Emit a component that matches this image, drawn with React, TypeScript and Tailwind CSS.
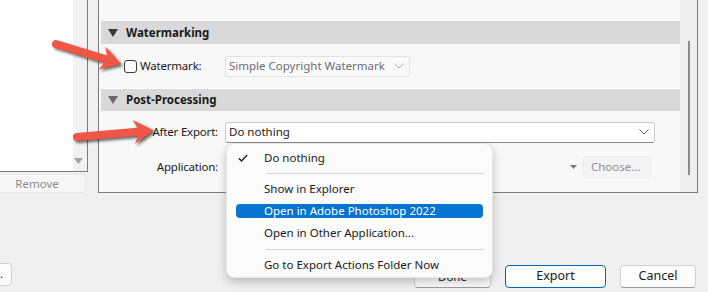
import React from "react";

const font = { fontFamily: '"Noto Sans", "Open Sans", sans-serif' };

function Arrow({ x, y, len, angle }: { x: number; y: number; len: number; angle: number }) {
  const h = len - 16;
  const d = `M0,-4 L${h},-4 L${h - 4},-12 L${len},0 L${h - 4},12 L${h},4 L0,4 A4,4 0 0 1 0,-4 Z`;
  return (
    <g transform={`translate(${x},${y}) rotate(${angle})`}>
      <path d={d} fill="#ef5646" />
    </g>
  );
}

function Chevron({ color = "#555" }: { color?: string }) {
  return (
    <svg width="10" height="6" viewBox="0 0 10 6">
      <path d="M0.5,0.5 L5,5 L9.5,0.5" fill="none" stroke={color} strokeWidth="1" />
    </svg>
  );
}

function Tri({ color }: { color: string }) {
  return (
    <svg width="10" height="8" viewBox="0 0 10 8">
      <path d="M0,0 L10,0 L5,8 Z" fill={color} />
    </svg>
  );
}

const items = [
  { label: "Show in Explorer" },
  { label: "Open in Adobe Photoshop 2022", active: true },
  { label: "Open in Other Application..." },
];

export default function App() {
  return (
    <div
      className="relative h-[292px] w-[708px] overflow-hidden bg-[#f0f0f0] text-[11.5px] text-[#1a1a1a]"
      style={font}
    >
      <div className="flex h-[193px]">
        {/* left list */}
        <div className="w-[88px] shrink-0">
          <div className="flex h-[172px] border-b border-r border-[#7c7c7c] bg-white">
            <div className="flex-1" />
            <div className="flex w-[14px] flex-col justify-end bg-[#f2f2f2] pb-[7px] pl-[1px]">
              <svg width="9" height="6" viewBox="0 0 9 6">
                <path d="M0,0 L9,0 L4.5,6 Z" fill="#a3a3a3" />
              </svg>
            </div>
          </div>
          <div className="-ml-[12px] mt-[2px] flex h-[19px] w-[98px] items-center justify-center rounded-[3px] border border-[#e8e8e8] bg-[#f6f6f6] text-[#8c8c8c]">
            Remove
          </div>
        </div>

        {/* main panel */}
        <div className="ml-[10px] flex h-[193px] w-[600px] border-b border-l border-r border-[#7c7c7c] bg-[#f8f8f8]">
          <div className="flex-1 pl-[2px] pt-[21px]">
            <div className="flex h-[23px] items-center gap-[8px] bg-[#d9d9d9] pl-[7px] font-bold">
              <Tri color="#3a3a3a" />
              <span>Watermarking</span>
            </div>
            <div className="flex h-[44px] items-center">
              <div className="flex w-[124px] items-center gap-[3px] pl-[23px]">
                <div className="h-[13px] w-[13px] rounded-[3px] border border-[#3c3c3c] bg-[#fbfbfb]" />
                <span className="tracking-[-0.2px]">Watermark:</span>
              </div>
              <div className="flex h-[21px] w-[185px] items-center justify-between rounded-[2px] border border-[#e3e3e3] bg-[#fafafa] pl-[3px] pr-[5px] text-[#6e6e6e]">
                <span>Simple Copyright Watermark</span>
                <Chevron color="#b0b0b0" />
              </div>
            </div>
            <div className="flex h-[23px] items-center gap-[8px] border-t border-white bg-[#d9d9d9] pl-[7px] font-bold">
              <Tri color="#6b6b6b" />
              <span>Post-Processing</span>
            </div>
            <div className="flex h-[33px] items-center pt-[9px]">
              <div className="w-[118px] pr-[1px] text-right tracking-[-0.2px]">After Export:</div>
              <div className="ml-[6px] flex h-[21px] w-[430px] items-center justify-between rounded-[3px] border border-[#cbcbcb] border-b-[#8e8e8e] bg-white pl-[3px] pr-[5px]">
                <span>Do nothing</span>
                <Chevron />
              </div>
            </div>
            <div className="flex h-[46px] items-center">
              <div className="w-[118px] pr-[1px] text-right tracking-[-0.2px]">Application:</div>
              <div className="ml-auto mr-[29px] flex items-center gap-[6px]">
                <svg width="7" height="4" viewBox="0 0 7 4">
                  <path d="M0,0 L7,0 L3.5,4 Z" fill="#7a7a7a" />
                </svg>
                <div className="flex h-[22px] w-[68px] items-center rounded-[3px] border border-[#ececec] bg-[#f4f4f4] pl-[7px] text-[#8f8f8f]">
                  Choose...
                </div>
              </div>
            </div>
          </div>
          <div className="flex w-[17px] justify-center bg-[#efefef] pt-[41px]">
            <div className="h-[134px] w-[2px] bg-[#8c8c8c]" />
          </div>
        </div>
      </div>

      {/* bottom buttons */}
      <div className="flex items-start pt-[70px]">
        <div className="flex h-[23px] w-[12px] items-center rounded-r-[4px] border border-l-0 border-[#cfcfcf] bg-[#fbfbfb] pb-[2px]">
          <span className="leading-none">.</span>
        </div>
        <div className="ml-auto mr-[12px] mt-[2px] flex gap-[14px]">
          <div className="flex h-[23px] w-[77px] items-center justify-center rounded-[4px] border border-[#d0d0d0] border-b-[#9a9a9a] bg-[#fdfdfd]">
            Done
          </div>
          <div className="flex h-[23px] w-[101px] items-center justify-center rounded-[4px] border border-[#0067c0] bg-[#fdfdfd] text-[12.5px]">
            Export
          </div>
          <div className="flex h-[23px] w-[76px] items-center justify-center rounded-[4px] border border-[#d0d0d0] border-b-[#9a9a9a] bg-[#fdfdfd] text-[12.5px]">
            Cancel
          </div>
        </div>
      </div>

      {/* dropdown menu */}
      <div className="absolute left-[226px] top-[143px] w-[267px] rounded-[8px] border border-[#e6e6e6] bg-[#fbfbfb] pb-[1px] pt-[3px] shadow-[0_4px_10px_rgba(0,0,0,0.22)]">
        <div className="flex h-[22px] items-center px-[9px]">
          <div className="flex w-[28px] pl-[2px]">
            <svg width="10" height="8" viewBox="0 0 10 8">
              <path d="M0.8,4.2 L3.6,7 L9.2,1" fill="none" stroke="#222" strokeWidth="1.4" />
            </svg>
          </div>
          <span>Do nothing</span>
        </div>
        <div className="flex h-[9px] items-center pl-[39px] pr-[8px]">
          <div className="h-px w-full bg-[#d6d6d6]" />
        </div>
        {items.map((it) => (
          <div key={it.label} className="h-[22px] px-[9px] py-[4px]">
            <div
              className={`flex h-[14px] items-center rounded-[4px] pl-[28px] ${
                it.active ? "bg-[#0674d1] text-white" : ""
              }`}
            >
              {it.label}
            </div>
          </div>
        ))}
        <div className="flex h-[10px] items-center pl-[39px] pr-[8px]">
          <div className="h-px w-full bg-[#d6d6d6]" />
        </div>
        <div className="flex h-[22px] items-center pl-[37px]">Go to Export Actions Folder Now</div>
      </div>

      {/* annotation arrows */}
      <svg
        className="pointer-events-none absolute left-0 top-0"
        width="708"
        height="292"
        style={{ filter: "drop-shadow(2px 2px 1.5px rgba(0,0,0,0.6))" }}
      >
        <Arrow x={56} y={44} len={68} angle={17} />
        <Arrow x={77} y={137} len={77} angle={-5} />
      </svg>
    </div>
  );
}
